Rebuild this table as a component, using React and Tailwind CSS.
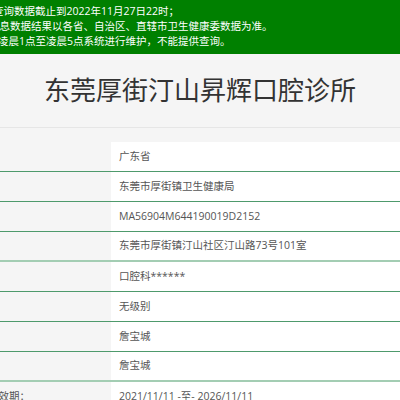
export default function App() {
  const rows = [
    { v: "广东省", b: "n" },
    { v: "东莞市厚街镇卫生健康局", b: "n" },
    { v: "MA56904M644190019D2152", b: "n" },
    { v: "东莞市厚街镇汀山社区汀山路73号101室", b: "l" },
    { v: "口腔科******", b: "n" },
    { v: "无级别", b: "n" },
    { v: "詹宝城", b: "n" },
    { v: "詹宝城", b: "l" },
  ];
  return (
    <div
      className="w-[400px] h-[400px] overflow-hidden bg-[#f5f5f5]"
      style={{ fontFamily: '"Open Sans", "Noto Sans CJK SC", sans-serif' }}
    >
      <div className="bg-[#008000] text-white text-[10.5px] leading-[15px] pt-[4px] pb-[5px] whitespace-nowrap overflow-hidden">
        <div className="ml-[-7px]">查询数据截止到2022年11月27日22时；</div>
        <div className="ml-[-11px]">信息数据结果以各省、自治区、直辖市卫生健康委数据为准。</div>
        <div className="ml-[-2px]">凌晨1点至凌晨5点系统进行维护，不能提供查询。</div>
      </div>
      <div className="h-[74px] flex items-center justify-center text-[26px] text-[#333] border-b border-[#e6e6e6]">
        东莞厚街汀山昇辉口腔诊所
      </div>
      <div className="mt-[14px] text-[10.5px] text-[#555]">
        {rows.map((r, i) => (
          <div
            key={i}
            className={
              "flex h-[30px] " +
              (r.b === "l" ? "border-b-2 border-[#a3cdb3]" : "border-b border-[#4e9a6c]")
            }
          >
            <div className="w-[111px]"></div>
            <div className="flex-1 bg-white flex items-center pl-[8px] whitespace-nowrap">{r.v}</div>
          </div>
        ))}
        <div className="flex h-[30px]">
          <div className="w-[111px] flex items-center whitespace-nowrap">
            <span className="ml-[-12px]">有效期：</span>
          </div>
          <div className="flex-1 bg-white flex items-center pl-[8px] whitespace-nowrap">
            2021/11/11 -至- 2026/11/11
          </div>
        </div>
      </div>
    </div>
  );
}
